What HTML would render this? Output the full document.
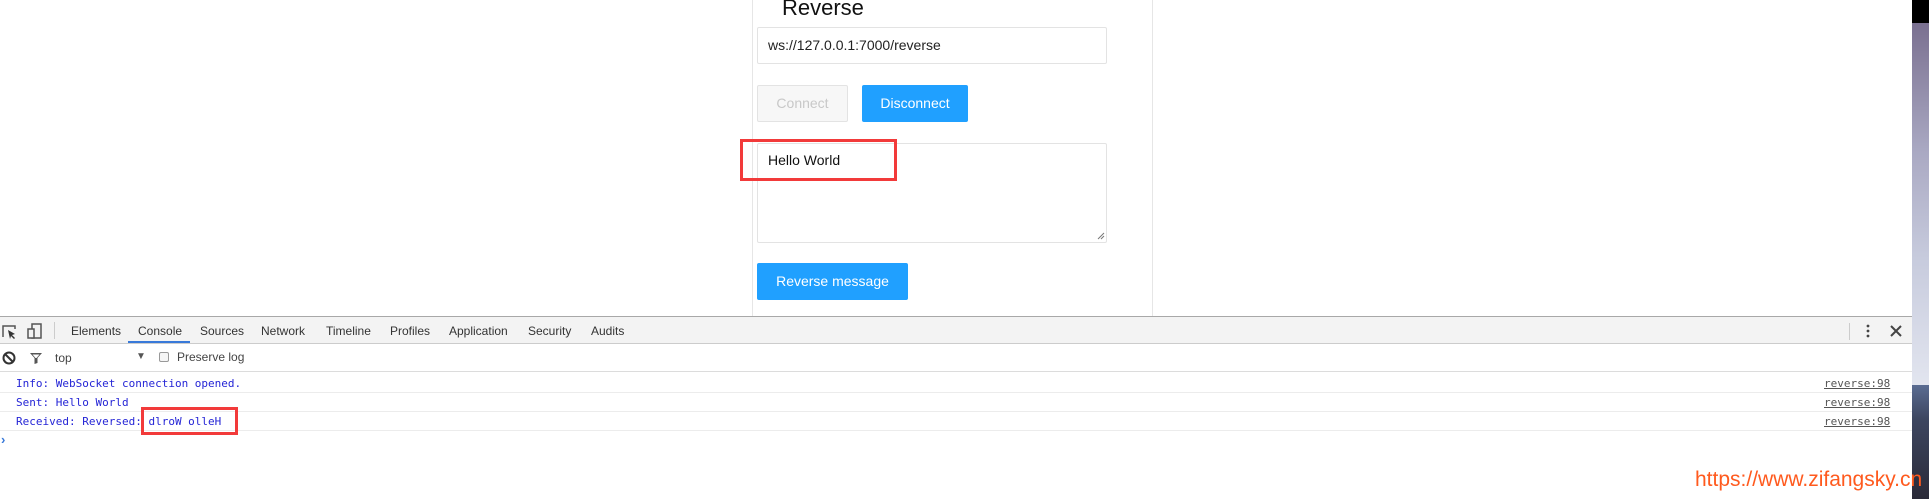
<!DOCTYPE html>
<html><head><meta charset="utf-8"><style>
*{box-sizing:border-box;margin:0;padding:0}
body{width:1929px;height:499px;overflow:hidden;background:#fff;position:relative;font-family:"Liberation Sans",Arial,sans-serif}
.a{position:absolute}
.btn{position:absolute;height:37px;border-radius:2px;font-size:14px;text-align:center;line-height:37px}
.mono{font-family:"DejaVu Sans Mono","Liberation Mono",monospace;font-size:11px}
.tab{position:absolute;top:324px;font-size:12px;color:#333}
.row{position:absolute;left:0;width:1912px;height:1px;background:#ececec}
.msg{position:absolute;left:16px;color:#2525d6}
.src{position:absolute;left:1824px;color:#555;text-decoration:underline}
</style></head><body>
<div class="a" style="left:752px;top:0;width:1px;height:317px;background:#e6e6e6"></div>
<div class="a" style="left:1152px;top:0;width:1px;height:317px;background:#e6e6e6"></div>
<div class="a" style="left:782px;top:-5px;font-size:22px;color:#111">Reverse</div>
<div class="a" style="left:757px;top:27px;width:350px;height:37px;border:1px solid #e3e3e3;border-radius:2px;font-size:14px;line-height:35px;padding-left:10px;color:#222">ws://127.0.0.1:7000/reverse</div>
<div class="btn" style="left:757px;top:85px;width:91px;border:1px solid #e3e3e3;background:#f7f7f7;color:#c8c8c8;line-height:35px">Connect</div>
<div class="btn" style="left:862px;top:85px;width:106px;background:#20a0ff;color:#fff">Disconnect</div>
<div class="a" style="left:757px;top:143px;width:350px;height:100px;border:1px solid #e3e3e3;border-radius:2px;font-size:14px;padding:8px 0 0 10px;color:#111">Hello World</div>
<svg class="a" style="left:1097px;top:232px" width="8" height="8"><path d="M1 7L7 1M4 7L7 4" stroke="#777" stroke-width="1"/></svg>
<div class="a" style="left:740px;top:139px;width:157px;height:42px;border:3px solid #f23a3a"></div>
<div class="btn" style="left:757px;top:263px;width:151px;background:#20a0ff;color:#fff">Reverse message</div>

<div class="a" style="left:0;top:316px;width:1912px;height:1px;background:#a8a8a8"></div>
<div class="a" style="left:0;top:317px;width:1912px;height:27px;background:#f3f3f3;border-bottom:1px solid #ccc"></div>
<svg class="a" style="left:2px;top:325px" width="16" height="14"><path d="M1 12V1h12v3" stroke="#555" fill="none" stroke-width="1.5"/><path d="M6 5l7 4-3 1 3 3-1 1-3-3-1 3z" fill="#333"/></svg>
<svg class="a" style="left:27px;top:323px" width="16" height="16"><rect x="5" y="1" width="9" height="14" stroke="#555" fill="none" stroke-width="1.5"/><rect x="1" y="6" width="6" height="9" stroke="#555" fill="#f3f3f3" stroke-width="1.5"/></svg>
<div class="a" style="left:54px;top:322px;width:1px;height:17px;background:#ccc"></div>
<div class="tab" style="left:71px">Elements</div>
<div class="tab" style="left:138px">Console</div>
<div class="a" style="left:128px;top:341px;width:62px;height:2px;background:#3879d9"></div>
<div class="tab" style="left:200px">Sources</div>
<div class="tab" style="left:261px">Network</div>
<div class="tab" style="left:326px">Timeline</div>
<div class="tab" style="left:390px">Profiles</div>
<div class="tab" style="left:449px">Application</div>
<div class="tab" style="left:528px">Security</div>
<div class="tab" style="left:591px">Audits</div>
<div class="a" style="left:1849px;top:323px;width:1px;height:17px;background:#ccc"></div>
<svg class="a" style="left:1864px;top:323px" width="8" height="16"><circle cx="4" cy="3" r="1.4" fill="#444"/><circle cx="4" cy="8" r="1.4" fill="#444"/><circle cx="4" cy="13" r="1.4" fill="#444"/></svg>
<svg class="a" style="left:1890px;top:325px" width="12" height="12"><path d="M1 1L11 11M11 1L1 11" stroke="#444" stroke-width="2"/></svg>

<svg class="a" style="left:2px;top:351px" width="14" height="14"><circle cx="7" cy="7" r="5.5" stroke="#333" stroke-width="2" fill="none"/><path d="M3 3L11 11" stroke="#333" stroke-width="2"/></svg>
<svg class="a" style="left:29px;top:351px" width="14" height="14"><path d="M1 2h12l-4.5 5v5l-3 1V7z" fill="#555"/><path d="M3.5 3.5h7l-3 3.5h-1z" fill="#fff"/></svg>
<div class="a" style="left:55px;top:351px;font-size:12px;color:#444">top</div>
<div class="a" style="left:136px;top:351px;font-size:10px;color:#555">▼</div>
<div class="a" style="left:159px;top:352px;width:10px;height:10px;border:1px solid #999;border-radius:2px;background:#f5f5f5"></div>
<div class="a" style="left:177px;top:350px;font-size:12px;color:#444">Preserve log</div>
<div class="row" style="top:371px;background:#dcdcdc"></div>

<div class="msg mono" style="top:377px">Info: WebSocket connection opened.</div>
<div class="src mono" style="top:377px">reverse:98</div>
<div class="row" style="top:392px"></div>
<div class="msg mono" style="top:396px">Sent: Hello World</div>
<div class="src mono" style="top:396px">reverse:98</div>
<div class="row" style="top:411px"></div>
<div class="msg mono" style="top:415px">Received: Reversed: dlroW olleH</div>
<div class="src mono" style="top:415px">reverse:98</div>
<div class="row" style="top:430px"></div>
<div class="a" style="left:141px;top:407px;width:97px;height:28px;border:3px solid #f23a3a"></div>
<div class="a" style="left:1px;top:432px;color:#3879d9;font-size:13px;font-weight:bold">›</div>

<div class="a" style="left:1912px;top:0;width:17px;height:23px;background:#000"></div>
<div class="a" style="left:1912px;top:23px;width:17px;height:362px;background:linear-gradient(#7a7090,#a9a8c2 35%,#c7cbdd 65%,#e2e5ef)"></div>
<div class="a" style="left:1912px;top:385px;width:17px;height:114px;background:linear-gradient(#5a6c92,#3d4660 30%,#2a2a38)"></div>
<div class="a" style="left:1695px;top:468px;font-size:21px;color:#ff5a1e;white-space:nowrap">https://www.zifangsky.cn</div>
</body></html>
